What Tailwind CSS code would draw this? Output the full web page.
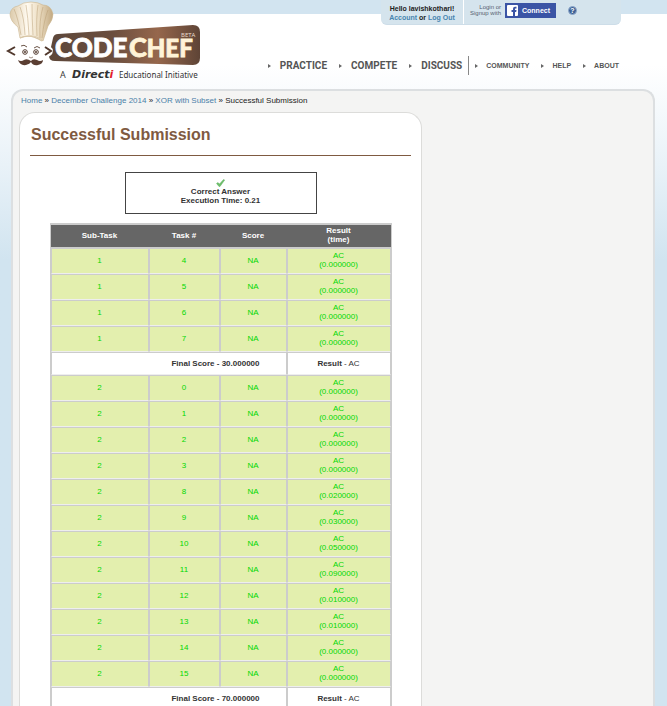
<!DOCTYPE html>
<html lang="en">
<head>
<meta charset="utf-8">
<meta name="viewport" content="width=device-width, initial-scale=1">
<title>Successful Submission | CodeChef</title>
<script src="https://cdn.jsdelivr.net/npm/@tailwindcss/browser@4"></script>
</head>
<body class="min-h-screen bg-[#d1e4f0] font-['Liberation_Sans',Arial,sans-serif] text-[8px] leading-[9px] text-[#333]">
<div class="bg-linear-to-b from-white from-[65px] via-[#e9f2f8] via-[165px] to-[#d1e4f0] to-[260px]">
<div class="bg-[linear-gradient(#d2e4f0_14px,transparent_14px)]">
<header class="flex h-[89px] justify-between pl-1 pr-[46px]">
  <a href="#" aria-label="CodeChef home" class="shrink-0">
    <svg width="202" height="84" viewBox="4 0 202 84" role="img" aria-label="CodeChef">
      <defs>
        <linearGradient id="board" x1="0" x2="1"><stop offset="0" stop-color="#5d473a"/><stop offset=".42" stop-color="#6a4e3e"/><stop offset=".72" stop-color="#96674c"/><stop offset="1" stop-color="#5e4436"/></linearGradient>
        <linearGradient id="hat" x1="0" x2="1"><stop offset="0" stop-color="#dccaaa"/><stop offset=".4" stop-color="#fffaf0"/><stop offset=".65" stop-color="#eee0c6"/><stop offset="1" stop-color="#c2a981"/></linearGradient>
      </defs>
      <path d="M53 38Q54 34 58 34L193 25Q200 25 200 32V58Q200 65 193 65L55 61Q49 61 49 56Z" fill="url(#board)"/>
      <path d="M20 38L18 27Q10 21 10 14Q11 7 18 6Q23 2 31 2Q38 2 43 5Q51 5 53 14Q53 20 48 26L43 41Q36 35 29 36Q24 36 20 38Z" fill="url(#hat)" stroke="#cbb58f" stroke-width=".6"/>
      <path d="M14 9Q18 18 21 35M20 7Q24 17 25 35M26 5Q28 17 29 35M32 4Q32 18 33 35M38 5Q36 18 37 36M43 7Q39 20 40 38M48 10Q44 20 42 38" fill="none" stroke="#b89c72" stroke-width=".8" opacity=".6"/>
      <path d="M19 42Q31 36 44 43L50 46Q56 51 50 56L43 59Q38 64 31 64Q20 62 18 51Z" fill="#fff"/>
      <path d="M20 38Q30 33 42 41" fill="none" stroke="#d8c6a6" stroke-width="1.2"/>
      <path d="M15 47L8 51L15 55M45 47L51 51L45 55" fill="none" stroke="#51392d" stroke-width="2"/>
      <path d="M21 46Q24 44 27 47M34 48Q37 45 40 48" fill="none" stroke="#6b5548" stroke-width="1"/>
      <circle cx="25" cy="52" r="2.300" fill="#fff" stroke="#51392d" stroke-width="1"/><circle cx="25" cy="52" r="1" fill="#51392d"/>
      <circle cx="36" cy="52" r="2.300" fill="#fff" stroke="#51392d" stroke-width="1"/><circle cx="36" cy="52" r="1" fill="#51392d"/>
      <path d="M29 57Q31 59 33 57" fill="none" stroke="#8b7567" stroke-width=".8"/>
      <path d="M31 61Q27 58 24 60Q21 62 18 60Q20 66 26 65Q30 64 31 62Q33 66 38 65Q43 64 43 60Q40 62 37 60Q33 58 31 61Z" fill="#5a3e32"/>
      <g font-family="Lato, sans-serif" font-weight="900" stroke-width=".8">
        <text x="55" y="57" font-size="26" fill="#fff" stroke="#fff">CODE</text>
        <text x="129" y="57" font-size="27" fill="#fff3d7" stroke="#fff3d7">C<tspan font-size="24">HEF</tspan></text>
      </g>
      <text x="181" y="37" font-family="Open Sans, sans-serif" font-size="6" fill="#eadfce">BETA</text>
      <text x="60" y="78" font-family="Open Sans, sans-serif" font-size="9" fill="#333">A</text>
      <text x="72" y="78" font-family="DejaVu Sans, sans-serif" font-size="11" font-weight="700" font-style="italic" fill="#333">Direct<tspan fill="#e21b2c">i</tspan></text>
      <text x="119" y="78" font-family="Noto Sans, sans-serif" font-size="8" fill="#333">Educational Initiative</text>
    </svg>
  </a>
  <div class="flex flex-col items-end justify-between pb-[14px]">
    <div class="flex h-[25px] w-[240px] rounded-b-md border-b border-[#cddde8] bg-[#d5e4ed]">
      <div class="w-[83px] border-r border-white pt-1 text-center text-[7px] font-bold text-[#222]">Hello lavishkothari!<br><a href="#" class="text-[#4784b0]">Account</a> or <a href="#" class="text-[#4784b0]">Log Out</a></div>
      <div class="w-[37px] pt-1 text-right text-[6px] leading-[6px] text-[#555e70]">Login or<br>Signup with</div>
      <button type="button" class="ml-1 mt-[3px] flex h-[15px] w-[51px] items-center gap-1 bg-[#3a54a5] pl-[2px] text-[7px] font-bold text-white">
        <svg width="11" height="11" viewBox="0 0 11 11" aria-hidden="true"><rect width="11" height="11" rx="1" fill="#fff"/><path d="M6 11V7H4.500V5H6V3.800Q6 1.700 8 1.700H9.500V3.500H8.500Q8 3.500 8 4.100V5H9.500L9.200 7H8V11Z" fill="#3a54a5"/></svg>Connect</button>
      <button type="button" aria-label="Help" class="ml-3 mt-[6px] flex size-[9px] items-center justify-center rounded-full border border-[#8fa9cb] bg-[#3f6397] text-[7px] leading-[7px] font-bold text-white">?</button>
    </div>
    <nav class="flex h-[19px] items-center pr-[2px] font-bold text-[#555]" aria-label="Main">
      <div class="flex h-full items-center gap-3 border-r border-[#888] pr-[6px] font-[Roboto,sans-serif] text-[10px]">
        <a href="#" class="flex items-center gap-[9px]"><i class="border-y-2 border-l-3 border-y-transparent border-l-[#666]"></i>PRACTICE</a>
        <a href="#" class="flex items-center gap-[9px]"><i class="border-y-2 border-l-3 border-y-transparent border-l-[#666]"></i>COMPETE</a>
        <a href="#" class="flex items-center gap-[9px]"><i class="border-y-2 border-l-3 border-y-transparent border-l-[#666]"></i>DISCUSS</a>
      </div>
      <div class="flex items-center gap-3 pl-[6px] text-[7px]">
        <a href="#" class="flex items-center gap-2"><i class="border-y-2 border-l-3 border-y-transparent border-l-[#666]"></i>COMMUNITY</a>
        <a href="#" class="flex items-center gap-2"><i class="border-y-2 border-l-3 border-y-transparent border-l-[#666]"></i>HELP</a>
        <a href="#" class="flex items-center gap-2"><i class="border-y-2 border-l-3 border-y-transparent border-l-[#666]"></i>ABOUT</a>
      </div>
    </nav>
  </div>
</header>
<main class="ml-[11px] mr-[12px] rounded-t-xl border-2 border-b-0 border-[#dcdfe1] bg-[#f4f4f3] px-[6px] pt-[5px]">
  <nav class="pl-[2px] text-[#222]" aria-label="Breadcrumb"><a href="#" class="text-[#4a7fa8]">Home</a> » <a href="#" class="text-[#4a7fa8]">December Challenge 2014</a> » <a href="#" class="text-[#4a7fa8]">XOR with Subset</a> » Successful Submission</nav>
  <section class="mt-[7px] w-[403px] max-w-full rounded-t-2xl border border-b-0 border-[#dcdcda] bg-white px-[10px] pt-3">
    <h1 class="border-b border-[#7f5a41] pb-[10px] pl-px text-[16px] leading-5 font-bold text-[#7f5a41]">Successful Submission</h1>
    <div class="mx-auto mt-4 flex h-[42px] w-[192px] flex-col items-center border border-[#444] pt-[6px] text-center font-bold">
      <svg width="9" height="8" viewBox="0 0 9 8" aria-hidden="true"><path d="M0.500 4.500L2 3.500L3.500 5L7.500 0.500L8.700 1L4 7.500H3Z" fill="#6fbf6a" stroke="#4fa653" stroke-width=".4"/></svg>
      <p>Correct Answer<br>Execution Time: 0.21</p>
    </div>
    <table id="results" class="mx-auto mt-[9px] w-[342px] table-fixed border-separate border-spacing-0 border border-[#ccc] text-center">
      <colgroup><col class="w-[98px]"><col class="w-[71px]"><col class="w-[67px]"><col class="w-[104px]"></colgroup>
      <thead><tr class="h-6 bg-[#666] text-white"><th class="border-y border-[#ccc] pb-[2px]">Sub-Task</th><th class="border-y border-[#ccc] pb-[2px]">Task #</th><th class="border-y border-[#ccc] pb-[2px]">Score</th><th class="border-y border-[#ccc] pb-[2px]">Result<br>(time)</th></tr></thead>
      <tbody></tbody>
    </table>
  </section>
</main>
</div>
</div>
<script>
const groups = [
  { id: 1, total: '30.000000', tasks: [[4,'0.000000'],[5,'0.000000'],[6,'0.000000'],[7,'0.000000']] },
  { id: 2, total: '70.000000', tasks: [[0,'0.000000'],[1,'0.000000'],[2,'0.000000'],[3,'0.000000'],[8,'0.020000'],[9,'0.030000'],[10,'0.050000'],[11,'0.090000'],[12,'0.010000'],[13,'0.010000'],[14,'0.000000'],[15,'0.000000']] }
];
const cell = 'border-x border-t border-b border-x-[#ccc] border-t-[#ccc] border-b-[#eee]';
document.querySelector('#results tbody').innerHTML = groups.map(g =>
  g.tasks.map(([n, t]) => `<tr class="h-[26px] bg-[#e3efae] text-[#00d800]"><td class="${cell} pb-[2px]">${g.id}</td><td class="${cell} pb-[2px]">${n}</td><td class="${cell} pb-[2px]">NA</td><td class="${cell} pb-[2px]">AC<br>(${t})</td></tr>`).join('') +
  `<tr class="h-[23px] bg-white"><td colspan="3" class="${cell} pr-[26px] text-right font-bold">Final Score - ${g.total}</td><td class="${cell}"><b>Result</b> - AC</td></tr>`
).join('');
</script>
</body>
</html>
